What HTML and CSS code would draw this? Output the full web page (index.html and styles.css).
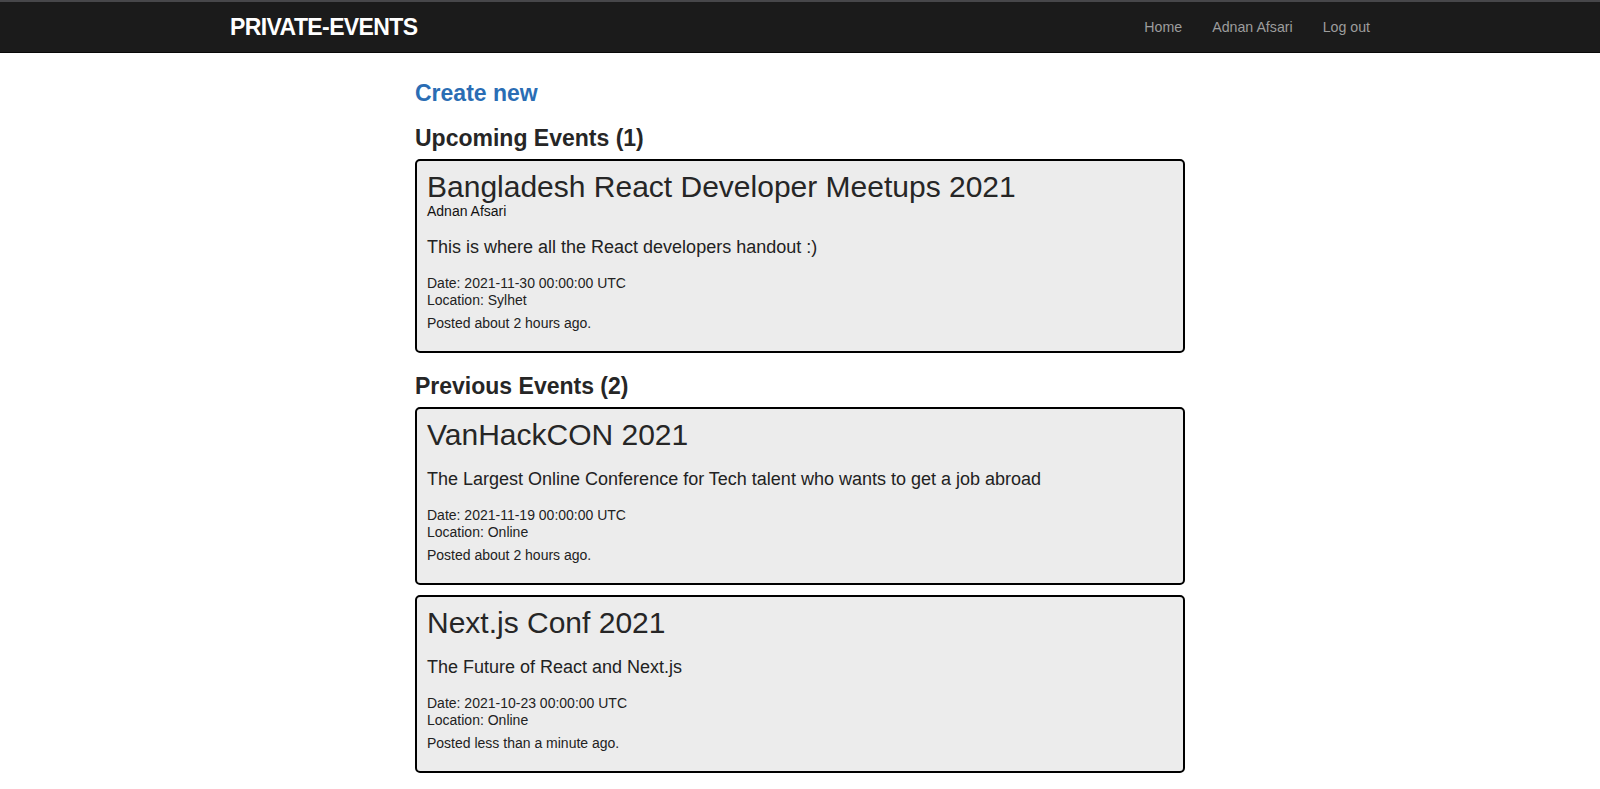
FILE: index.html
```html
<!DOCTYPE html>
<html lang="en">
<head>
<meta charset="utf-8">
<title>Private Events</title>
<link rel="stylesheet" href="styles.css">
</head>
<body>
<nav class="navbar">
  <div class="container nav-inner">
    <a class="brand" href="#">PRIVATE-EVENTS</a>
    <ul class="nav-links">
      <li><a href="#">Home</a></li>
      <li><a href="#">Adnan Afsari</a></li>
      <li><a href="#">Log out</a></li>
    </ul>
  </div>
</nav>
<main class="content">
  <h3 class="create"><a href="#">Create new</a></h3>
  <h3 class="section-title">Upcoming Events (1)</h3>
  <div class="card">
    <h2 class="title">Bangladesh React Developer Meetups 2021</h2>
    <div class="author">Adnan Afsari</div>
    <p class="desc">This is where all the React developers handout :)</p>
    <div class="meta">Date: 2021-11-30 00:00:00 UTC<br>Location: Sylhet</div>
    <div class="posted">Posted about 2 hours ago.</div>
  </div>
  <h3 class="section-title">Previous Events (2)</h3>
  <div class="card">
    <h2 class="title">VanHackCON 2021</h2>
    <p class="desc">The Largest Online Conference for Tech talent who wants to get a job abroad</p>
    <div class="meta">Date: 2021-11-19 00:00:00 UTC<br>Location: Online</div>
    <div class="posted">Posted about 2 hours ago.</div>
  </div>
  <div class="card">
    <h2 class="title">Next.js Conf 2021</h2>
    <p class="desc">The Future of React and Next.js</p>
    <div class="meta">Date: 2021-10-23 00:00:00 UTC<br>Location: Online</div>
    <div class="posted">Posted less than a minute ago.</div>
  </div>
</main>
</body>
</html>
```
FILE: styles.css
```css
* { box-sizing: border-box; }
html, body { margin: 0; padding: 0; }
body {
  font-family: "Liberation Sans", Arial, sans-serif;
  font-size: 14px;
  color: #333;
  background: #fff;
}
a { text-decoration: none; }

.navbar {
  background: #1b1b1b;
  border-top: 2px solid #47474a;
  border-bottom: 1px solid #080808;
}
.container {
  width: 1170px;
  margin: 0 auto;
  padding: 0 15px;
}
.nav-inner {
  display: flex;
  align-items: center;
  justify-content: space-between;
  height: 50px;
}
.brand {
  color: #fff;
  font-weight: bold;
  font-size: 23px;
  letter-spacing: -0.6px;
}
.nav-links {
  display: flex;
  list-style: none;
  margin: 0;
  padding: 0;
}
.nav-links a {
  display: block;
  color: #9d9d9d;
  font-size: 14.2px;
  padding: 0 15px;
  line-height: 50px;
}
.nav-links li:last-child a { padding-right: 0; }

.content {
  width: 770px;
  margin: 0 auto;
  padding-top: 27px;
}
.create, .section-title {
  font-size: 23px;
  font-weight: bold;
  line-height: 26px;
  margin: 0 0 8px;
}
.create { margin-bottom: 19px; }
.create a { color: #2a6db4; }
.section-title { color: #262626; }
.card {
  background: #ececec;
  border: 2px solid #000;
  border-radius: 5px;
  padding: 9px 10px 19px;
  margin-bottom: 10px;
}
.card + .section-title { margin-top: 20px; }
.title {
  font-size: 30px;
  font-weight: normal;
  line-height: 33px;
  margin: 0;
  color: #262626;
}
.author {
  font-size: 14px;
  line-height: 16px;
  margin-top: 0;
  color: #111;
}
.desc {
  font-size: 18px;
  line-height: 24px;
  margin: 16px 0 16px;
  color: #222;
}
.meta {
  font-size: 14px;
  line-height: 17px;
  color: #222;
}
.posted {
  font-size: 14px;
  line-height: 17px;
  margin-top: 6px;
  color: #222;
}
```
